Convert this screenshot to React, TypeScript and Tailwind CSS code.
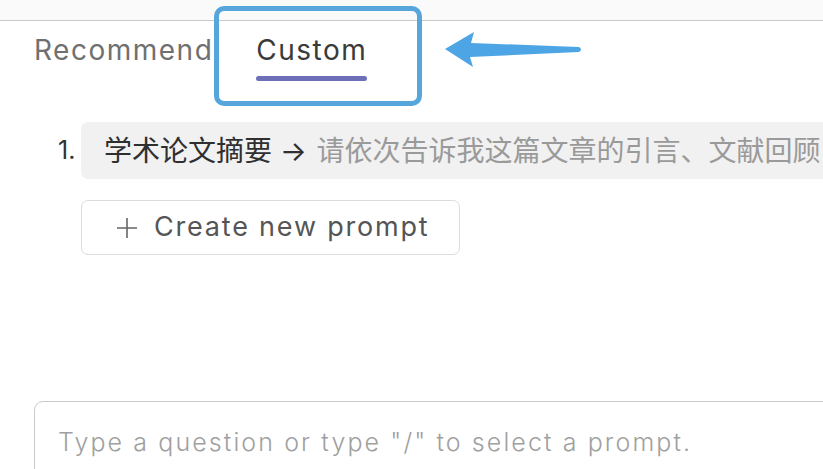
import React from "react";

const sans = "font-['Inter','Noto_Sans_CJK_SC',sans-serif]";

export default function App() {
  return (
    <div
      className={`relative h-[469px] w-[823px] overflow-hidden bg-white ${sans}`}
    >
      {/* header strip */}
      <div className="h-[21px] border-b-[1.5px] border-[#c9c9c9] bg-[#fafafa]" />

      {/* tabs */}
      <div className="flex gap-[43px] pl-[34px] pt-[13px]">
        <div className="flex flex-col">
          <span className="text-[28px] leading-[32px] tracking-[1.5px] text-[#707070]">Recommend</span>
        </div>
        <div className="flex flex-col items-stretch">
          <span className="text-[28px] leading-[32px] tracking-[1.5px] text-[#3a3a3a]">Custom</span>
          <div className="mt-[10px] h-[5px] rounded-full bg-[#6e6fb9]" />
        </div>
      </div>

      {/* prompt list */}
      <div className="mt-[41px] flex items-center pl-[58px]">
        <span className="w-[23px] shrink-0 text-[25px] text-[#333]">1.</span>
        <div className="flex h-[57px] w-[900px] shrink-0 items-center whitespace-nowrap rounded-[7px] bg-[#f1f1f1] pl-[23px] text-[28px]">
          <span className="text-[#2f2f2f]">学术论文摘要 →</span>
          <span className="ml-[10px] text-[#9a9a9a]">请依次告诉我这篇文章的引言、文献回顾</span>
        </div>
      </div>

      {/* create button */}
      <div className="ml-[81px] mt-[21px] flex h-[55px] w-[379px] items-center gap-[16px] rounded-[7px] border-[1.5px] border-[#dcdcdc] pl-[34px] text-[27px] tracking-[1.8px] text-[#555]">
        <svg width="22" height="22" viewBox="0 0 22 22" className="shrink-0">
          <path d="M11 1 V21 M1 11 H21" stroke="#666" strokeWidth="1.6" />
        </svg>
        <span>Create new prompt</span>
      </div>

      {/* input */}
      <div className="ml-[34px] mt-[146px] flex h-[90px] w-[820px] items-start rounded-[9px] border-[1.5px] border-[#cacaca] pl-[23px] pt-[24px]">
        <span className="text-[25px] font-light leading-[32px] tracking-[2.1px] text-[#a0a0a0]">
          Type a question or type "/" to select a prompt.
        </span>
      </div>

      {/* annotation box */}
      <div className="absolute left-[214px] top-[6px] h-[100px] w-[208px] rounded-[10px] border-[5px] border-[#56a6dc]" />

      {/* annotation arrow */}
      <svg
        className="pointer-events-none absolute inset-0"
        width="823"
        height="469"
        viewBox="0 0 823 469"
      >
        <path
          d="M445 49 L474 32 L471 43 L579 47 Q583 49.5 579 52 L470 57 L473 67 Z"
          fill="#4ea5e6"
        />
      </svg>
    </div>
  );
}
